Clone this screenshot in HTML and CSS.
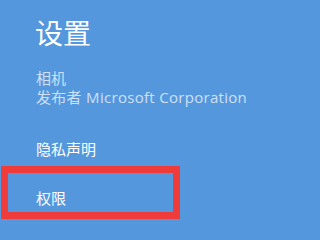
FILE: index.html
```html
<!DOCTYPE html>
<html lang="zh-CN">
<head>
<meta charset="utf-8">
<title>设置</title>
<link rel="stylesheet" href="styles.css">
</head>
<body>
<div class="panel">
  <h1 class="title">设置</h1>
  <div class="app-info">
    <div class="app-name">相机</div>
    <div class="publisher">发布者 Microsoft Corporation</div>
  </div>
  <div class="link privacy">隐私声明</div>
  <div class="link permissions highlighted">权限</div>
</div>
</body>
</html>
```
FILE: styles.css
```css
html, body {
  margin: 0;
  padding: 0;
}
body {
  background: #5597dd;
  width: 256px;
  height: 239px;
  overflow: hidden;
  font-family: "Open Sans", "Noto Sans CJK SC", sans-serif;
  color: #ffffff;
}
.panel {
  display: flex;
  flex-direction: column;
  padding-top: 18px;
}
.title {
  margin: 0 0 0 35px;
  font-family: "Noto Sans CJK SC", sans-serif;
  font-weight: 400;
  font-size: 28px;
  line-height: 28px;
}
.app-info {
  margin: 23px 0 0 36px;
  font-size: 15px;
  line-height: 19px;
  color: #cde0f5;
}
.publisher {
  letter-spacing: 0.3px;
  white-space: nowrap;
}
.link {
  font-size: 15px;
  line-height: 19px;
  color: #ffffff;
}
.privacy {
  margin: 33px 0 0 36px;
}
.highlighted {
  margin: 7px 0 0 1px;
  width: 137px;
  border: 7px solid #f03b3b;
  padding: 16px 0 4px 28px;
}
```
